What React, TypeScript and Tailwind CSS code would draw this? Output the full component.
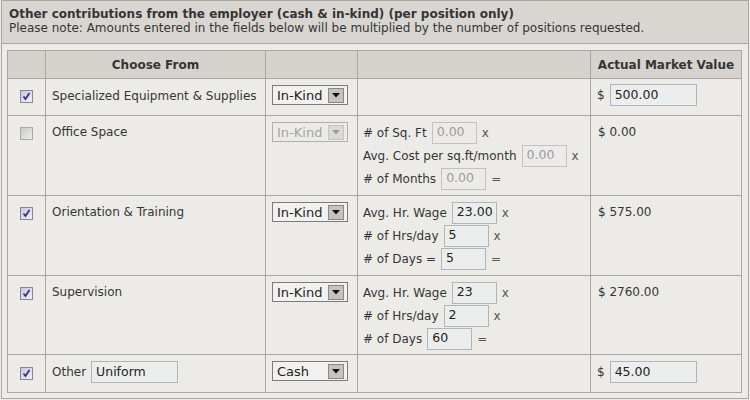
import React from "react";

const Checkbox = ({ checked = true, disabled = false }: { checked?: boolean; disabled?: boolean }) => (
  <span
    className={
      "flex w-[13px] h-[13px] items-center justify-center border " +
      (disabled
        ? "border-[#a9a9a9] bg-gradient-to-br from-[#c9c9c9] to-[#ececec]"
        : "border-[#8585a0] bg-gradient-to-br from-[#c7c7d6] to-[#f2f2f6]")
    }
  >
    {checked && !disabled && (
      <svg width="9" height="9" viewBox="0 0 9 9">
        <path d="M1.5 4.5 L3.5 7 L7.5 1" fill="none" stroke="#34348a" strokeWidth="1.8" />
      </svg>
    )}
  </span>
);

const Select = ({ value, disabled = false }: { value: string; disabled?: boolean }) => (
  <div
    className={
      "flex w-[76px] h-[20px] items-center border pl-[4px] pr-[3px] text-[13px] " +
      (disabled ? "border-[#b0afac] text-[#a3a3a3] bg-[#ecebe8]" : "border-[#7d7c7a] text-[#222] bg-[#f2f1ef]")
    }
  >
    <span className="leading-none">{value}</span>
    <span
      className={
        "ml-auto flex w-[16px] h-[15px] items-center justify-center border " +
        (disabled ? "border-[#c4c3c0] bg-[#dcdad6]" : "border-[#8a8884] bg-[#c6c3be]")
      }
    >
      <svg width="8" height="5" viewBox="0 0 8 5">
        <path d="M0 0 H8 L4 4.5 Z" fill={disabled ? "#9c9a96" : "#111"} />
      </svg>
    </span>
  </div>
);

const Input = ({ value, w, disabled = false }: { value: string; w: string; disabled?: boolean }) => (
  <span
    className={
      "flex h-[22px] items-center border pl-[4px] text-[12.5px] " +
      w +
      " " +
      (disabled ? "border-[#c2c2c0] text-[#9b9b9b] bg-[#ecebe8]" : "border-[#adb6ba] text-[#222] bg-[#eceeed]")
    }
  >
    {value}
  </span>
);

const Line = ({ label, value, op, disabled = false }: { label: string; value: string; op: string; disabled?: boolean }) => (
  <div className="flex h-[23px] items-center">
    <span className="mr-[5px]">{label}</span>
    <Input value={value} w="w-[45px]" disabled={disabled} />
    <span className="ml-[5px] text-[#555]">{op}</span>
  </div>
);

const cell = "border-r border-b border-[#a9a7a3]";

export default function App() {
  return (
    <div className="w-[750px] h-[400px] bg-[#ecebe8] text-[#353535] text-[12px]" style={{ fontFamily: '"DejaVu Sans", Verdana, sans-serif' }}>
      <div className="ml-[1px] w-[748px] h-[399px] border border-[#a9a7a3]">
        <div className="h-[43px] bg-[#d9d6d1] border-b border-[#a9a7a3] pl-[7px] pt-[6px] leading-[14px]">
          <div className="font-bold">Other contributions from the employer (cash &amp; in-kind) (per position only)</div>
          <div>Please note: Amounts entered in the fields below will be multiplied by the number of positions requested.</div>
        </div>
        <div className="mt-[6px] ml-[5px] w-[735px] grid grid-cols-[38px_220px_92px_233px_151px] grid-rows-[28px_37px_80px_80px_79px_38px] border-l border-t border-[#a9a7a3]">
          {/* header */}
          <div className={cell + " bg-[#d6d3ce]"} />
          <div className={cell + " bg-[#d6d3ce] flex items-center justify-center font-bold"}>Choose From</div>
          <div className={cell + " bg-[#d6d3ce]"} />
          <div className={cell + " bg-[#d6d3ce]"} />
          <div className={cell + " bg-[#d6d3ce] flex items-center justify-center font-bold"}>Actual Market Value</div>

          {/* row 1 */}
          <div className={cell + " flex justify-center pt-[11px]"}><Checkbox /></div>
          <div className={cell + " pl-[6px] pt-[8px]"}>Specialized Equipment &amp; Supplies</div>
          <div className={cell + " pl-[6px] pt-[6px]"}><Select value="In-Kind" /></div>
          <div className={cell} />
          <div className={cell + " pl-[6px] pt-[5px]"}>
            <div className="flex items-center">
              <span className="mr-[5px]">$</span>
              <Input value="500.00" w="w-[87px]" />
            </div>
          </div>

          {/* row 2 */}
          <div className={cell + " flex justify-center pt-[11px]"}><Checkbox disabled /></div>
          <div className={cell + " pl-[6px] pt-[7px]"}>Office Space</div>
          <div className={cell + " pl-[6px] pt-[6px]"}><Select value="In-Kind" disabled /></div>
          <div className={cell + " pl-[5px] pt-[5px]"}>
            <Line label="# of Sq. Ft" value="0.00" op="x" disabled />
            <Line label="Avg. Cost per sq.ft/month" value="0.00" op="x" disabled />
            <Line label="# of Months" value="0.00" op="=" disabled />
          </div>
          <div className={cell + " pl-[7px] pt-[7px]"}>$ 0.00</div>

          {/* row 3 */}
          <div className={cell + " flex justify-center pt-[11px]"}><Checkbox /></div>
          <div className={cell + " pl-[6px] pt-[7px]"}>Orientation &amp; Training</div>
          <div className={cell + " pl-[6px] pt-[6px]"}><Select value="In-Kind" /></div>
          <div className={cell + " pl-[5px] pt-[5px]"}>
            <Line label="Avg. Hr. Wage" value="23.00" op="x" />
            <Line label="# of Hrs/day" value="5" op="x" />
            <Line label="# of Days =" value="5" op="=" />
          </div>
          <div className={cell + " pl-[7px] pt-[7px]"}>$ 575.00</div>

          {/* row 4 */}
          <div className={cell + " flex justify-center pt-[11px]"}><Checkbox /></div>
          <div className={cell + " pl-[6px] pt-[7px]"}>Supervision</div>
          <div className={cell + " pl-[6px] pt-[6px]"}><Select value="In-Kind" /></div>
          <div className={cell + " pl-[5px] pt-[5px]"}>
            <Line label="Avg. Hr. Wage" value="23" op="x" />
            <Line label="# of Hrs/day" value="2" op="x" />
            <Line label="# of Days" value="60" op="=" />
          </div>
          <div className={cell + " pl-[7px] pt-[7px]"}>$ 2760.00</div>

          {/* row 5 */}
          <div className={cell + " flex justify-center pt-[12px]"}><Checkbox /></div>
          <div className={cell + " pl-[6px] pt-[6px]"}>
            <div className="flex items-center">
              <span className="mr-[5px]">Other</span>
              <Input value="Uniform" w="w-[87px]" />
            </div>
          </div>
          <div className={cell + " pl-[6px] pt-[6px]"}><Select value="Cash" /></div>
          <div className={cell} />
          <div className={cell + " pl-[6px] pt-[6px]"}>
            <div className="flex items-center">
              <span className="mr-[5px]">$</span>
              <Input value="45.00" w="w-[87px]" />
            </div>
          </div>
        </div>
      </div>
    </div>
  );
}
